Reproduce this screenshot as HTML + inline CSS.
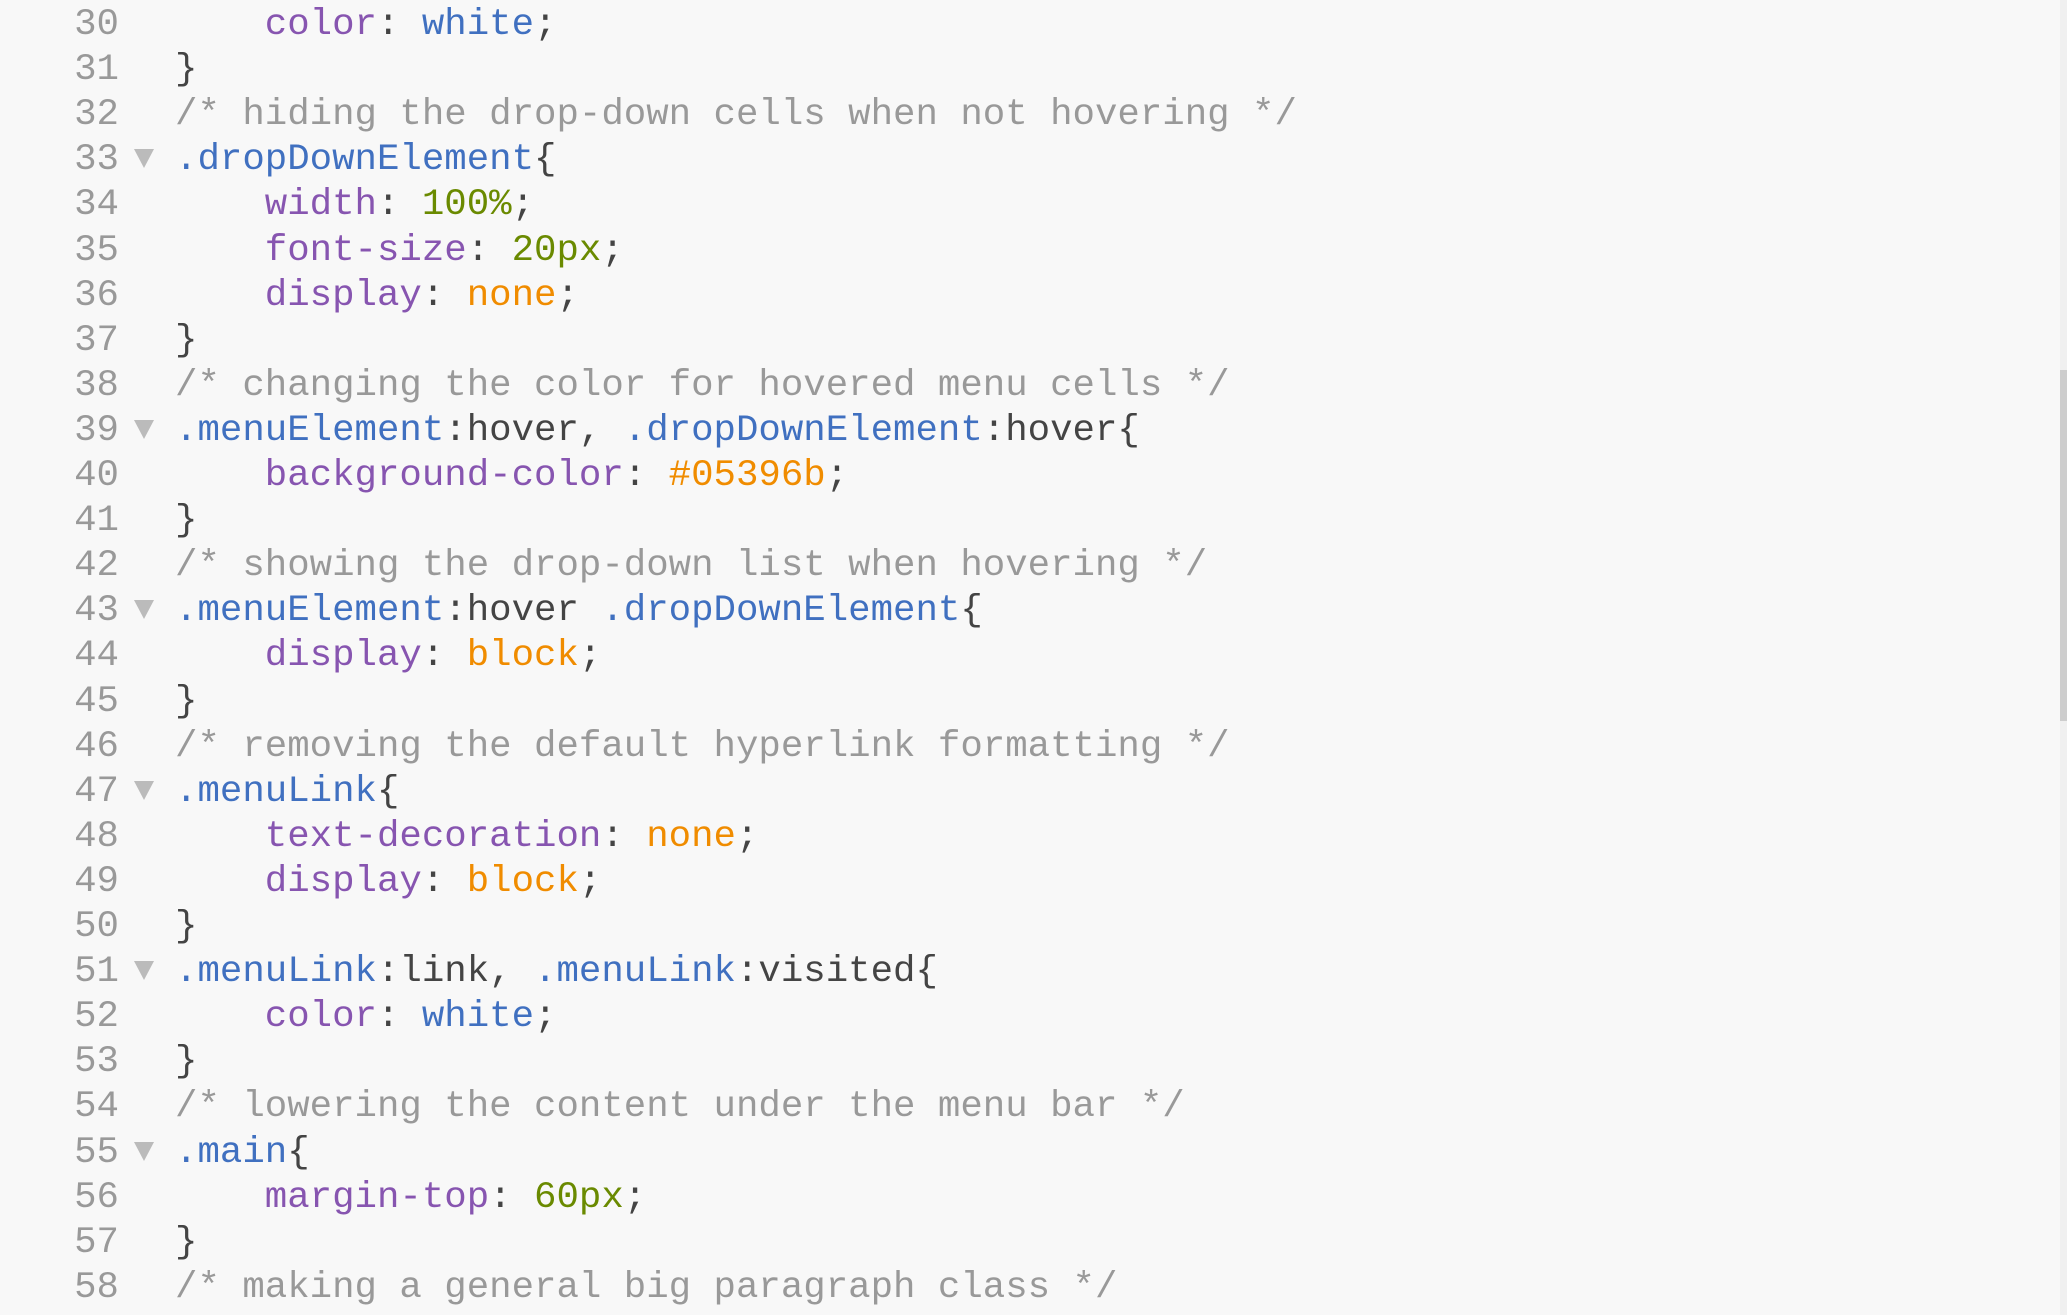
<!DOCTYPE html>
<html><head><meta charset="utf-8"><style>
html,body{margin:0;padding:0;width:2067px;height:1315px;overflow:hidden;background:#f8f8f8;}
#code{position:absolute;left:0;top:3px;font-family:"Liberation Mono",monospace;font-size:37.4px;letter-spacing:0px;}
.l{position:absolute;left:0;height:45.1px;line-height:45.1px;white-space:pre;width:2000px;}
.n{position:absolute;right:calc(100% - 119px);color:#999;text-align:right;width:100px;}
.c{position:absolute;left:175px;color:#444;}
.t{position:absolute;left:134px;top:11px;width:0;height:0;border-left:10px solid transparent;border-right:10px solid transparent;border-top:19px solid #bbb;}
.p{color:#8755b0}.b{color:#4070c0}.g{color:#6a8a00}.o{color:#f08c00}.m{color:#999}
#sb{position:absolute;left:2060px;top:0;width:7px;height:1315px;background:#f0f0f0;}
#th{position:absolute;left:2060px;top:370px;width:7px;height:351px;background:#cdcdcd;}
</style></head><body>
<div id="code">
<div class="l" style="top:0px"><span class="n">30</span><span class="c">    <span class="p">color</span>: <span class="b">white</span>;</span></div>
<div class="l" style="top:45.1px"><span class="n">31</span><span class="c">}</span></div>
<div class="l" style="top:90.2px"><span class="n">32</span><span class="c m">/* hiding the drop-down cells when not hovering */</span></div>
<div class="l" style="top:135.3px"><span class="n">33</span><span class="t"></span><span class="c"><span class="b">.dropDownElement</span>{</span></div>
<div class="l" style="top:180.4px"><span class="n">34</span><span class="c">    <span class="p">width</span>: <span class="g">100%</span>;</span></div>
<div class="l" style="top:225.5px"><span class="n">35</span><span class="c">    <span class="p">font-size</span>: <span class="g">20px</span>;</span></div>
<div class="l" style="top:270.6px"><span class="n">36</span><span class="c">    <span class="p">display</span>: <span class="o">none</span>;</span></div>
<div class="l" style="top:315.7px"><span class="n">37</span><span class="c">}</span></div>
<div class="l" style="top:360.8px"><span class="n">38</span><span class="c m">/* changing the color for hovered menu cells */</span></div>
<div class="l" style="top:405.9px"><span class="n">39</span><span class="t"></span><span class="c"><span class="b">.menuElement</span>:hover, <span class="b">.dropDownElement</span>:hover{</span></div>
<div class="l" style="top:451px"><span class="n">40</span><span class="c">    <span class="p">background-color</span>: <span class="o">#05396b</span>;</span></div>
<div class="l" style="top:496.1px"><span class="n">41</span><span class="c">}</span></div>
<div class="l" style="top:541.2px"><span class="n">42</span><span class="c m">/* showing the drop-down list when hovering */</span></div>
<div class="l" style="top:586.3px"><span class="n">43</span><span class="t"></span><span class="c"><span class="b">.menuElement</span>:hover <span class="b">.dropDownElement</span>{</span></div>
<div class="l" style="top:631.4px"><span class="n">44</span><span class="c">    <span class="p">display</span>: <span class="o">block</span>;</span></div>
<div class="l" style="top:676.5px"><span class="n">45</span><span class="c">}</span></div>
<div class="l" style="top:721.6px"><span class="n">46</span><span class="c m">/* removing the default hyperlink formatting */</span></div>
<div class="l" style="top:766.7px"><span class="n">47</span><span class="t"></span><span class="c"><span class="b">.menuLink</span>{</span></div>
<div class="l" style="top:811.8px"><span class="n">48</span><span class="c">    <span class="p">text-decoration</span>: <span class="o">none</span>;</span></div>
<div class="l" style="top:856.9px"><span class="n">49</span><span class="c">    <span class="p">display</span>: <span class="o">block</span>;</span></div>
<div class="l" style="top:902px"><span class="n">50</span><span class="c">}</span></div>
<div class="l" style="top:947.1px"><span class="n">51</span><span class="t"></span><span class="c"><span class="b">.menuLink</span>:link, <span class="b">.menuLink</span>:visited{</span></div>
<div class="l" style="top:992.2px"><span class="n">52</span><span class="c">    <span class="p">color</span>: <span class="b">white</span>;</span></div>
<div class="l" style="top:1037.3px"><span class="n">53</span><span class="c">}</span></div>
<div class="l" style="top:1082.4px"><span class="n">54</span><span class="c m">/* lowering the content under the menu bar */</span></div>
<div class="l" style="top:1127.5px"><span class="n">55</span><span class="t"></span><span class="c"><span class="b">.main</span>{</span></div>
<div class="l" style="top:1172.6px"><span class="n">56</span><span class="c">    <span class="p">margin-top</span>: <span class="g">60px</span>;</span></div>
<div class="l" style="top:1217.7px"><span class="n">57</span><span class="c">}</span></div>
<div class="l" style="top:1262.8px"><span class="n">58</span><span class="c m">/* making a general big paragraph class */</span></div>
</div>
<div id="sb"></div><div id="th"></div>
</body></html>
